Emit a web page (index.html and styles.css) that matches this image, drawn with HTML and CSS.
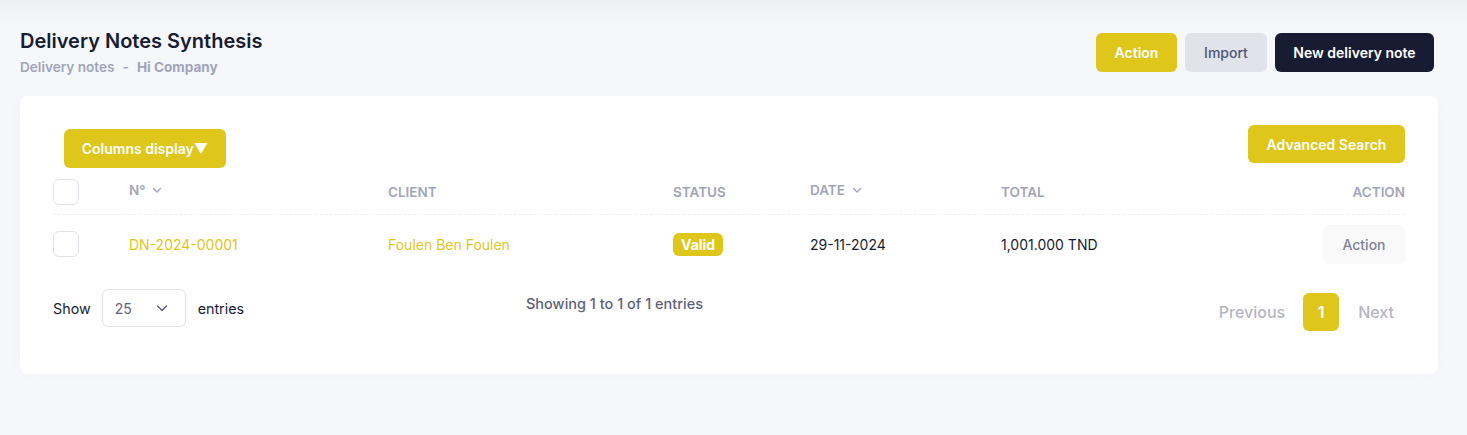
FILE: index.html
```html
<!DOCTYPE html>
<html lang="en">
<head>
<meta charset="utf-8">
<title>Delivery Notes Synthesis</title>
<link rel="stylesheet" href="styles.css">
</head>
<body>
<div class="page">
  <div class="toolbar">
    <div class="heading">
      <h1 class="title">Delivery Notes Synthesis</h1>
      <div class="crumbs"><span>Delivery notes</span><span class="dash">-</span><span class="company">Hi Company</span></div>
    </div>
    <div class="top-actions">
      <button class="btn btn-yellow">Action</button>
      <button class="btn btn-light">Import</button>
      <button class="btn btn-dark">New delivery note</button>
    </div>
  </div>

  <div class="card">
    <div class="card-head">
      <button class="btn btn-yellow btn-columns">Columns display▼</button>
      <button class="btn btn-yellow btn-adv">Advanced Search</button>
    </div>

    <table class="grid">
      <colgroup>
        <col class="c-check"><col class="c-no"><col class="c-client"><col class="c-status"><col class="c-date"><col class="c-total"><col class="c-action">
      </colgroup>
      <thead>
        <tr>
          <th><span class="check"></span></th>
          <th class="sortable">N°<svg class="chev" viewBox="0 0 12 12" width="12" height="12"><path d="M2.5 4.5 6 8l3.5-3.5" fill="none" stroke="currentColor" stroke-width="1.4" stroke-linecap="round" stroke-linejoin="round"/></svg></th>
          <th>CLIENT</th>
          <th>STATUS</th>
          <th class="sortable">DATE<svg class="chev" viewBox="0 0 12 12" width="12" height="12"><path d="M2.5 4.5 6 8l3.5-3.5" fill="none" stroke="currentColor" stroke-width="1.4" stroke-linecap="round" stroke-linejoin="round"/></svg></th>
          <th>TOTAL</th>
          <th class="right">ACTION</th>
        </tr>
      </thead>
      <tbody>
        <tr>
          <td><span class="check"></span></td>
          <td class="link">DN-2024-00001</td>
          <td class="link">Foulen Ben Foulen</td>
          <td><span class="badge">Valid</span></td>
          <td>29-11-2024</td>
          <td>1,001.000 TND</td>
          <td class="right"><button class="btn btn-row">Action</button></td>
        </tr>
      </tbody>
    </table>

    <div class="footer">
      <div class="length">
        <span>Show</span>
        <div class="select"><span>25</span><svg viewBox="0 0 14 14" width="14" height="14"><path d="M2.5 5 7 9.5 11.5 5" fill="none" stroke="#5e6278" stroke-width="1.5" stroke-linecap="round" stroke-linejoin="round"/></svg></div>
        <span>entries</span>
      </div>
      <div class="info">Showing 1 to 1 of 1 entries</div>
      <div class="pager">
        <span class="pg">Previous</span>
        <span class="pg-num">1</span>
        <span class="pg">Next</span>
      </div>
    </div>
  </div>
</div>
</body>
</html>
```

FILE: styles.css
```css
* { box-sizing: border-box; }
html, body { margin: 0; padding: 0; }
body {
  font-family: Inter, "Noto Sans", sans-serif;
  background: linear-gradient(to bottom, #eef0f4 0px, #f5f7fa 28px, #f5f7fa 100%);
  color: #181c32;
  min-height: 435px;
}
.page { padding: 29px 29px 0 20px; }

.toolbar {
  display: flex;
  justify-content: space-between;
  align-items: flex-start;
  height: 67px;
}
.title {
  margin: 0;
  font-size: 20px;
  font-weight: 600;
  line-height: 24px;
  color: #181c32;
}
.crumbs {
  margin-top: 6px;
  font-size: 13.6px;
  font-weight: 600;
  color: #a1a5b7;
  display: flex;
  gap: 8px;
}
.crumbs .company { font-weight: 700; }
.top-actions { display: flex; gap: 8px; margin-top: 4px; margin-right: 4px; }

.btn {
  font-family: inherit;
  border: 0;
  border-radius: 6px;
  font-size: 14px;
  font-weight: 600;
  height: 39px;
  padding: 0 20px;
  cursor: pointer;
}
.btn-yellow { background: #dec61a; color: #fff; }
.btn-light { background: #e1e3ea; color: #4b5675; font-weight: 500; width: 82px; padding: 0; }
.btn-dark { background: #181c32; color: #fff; width: 159px; padding: 0; }
.top-actions .btn-yellow { width: 81px; padding: 0; }

.card {
  background: #fff;
  border-radius: 8px;
  padding: 29px 33px 0 33px;
  height: 278px;
  box-shadow: 0 0 20px rgba(76, 87, 125, 0.02);
}
.card-head {
  display: flex;
  justify-content: space-between;
  align-items: flex-start;
  height: 43px;
}
.btn-columns { margin: 4px 0 0 11px; width: 162px; padding: 0; }
.btn-adv { width: 157px; height: 38px; padding: 0; }

.grid {
  width: 100%;
  border-collapse: collapse;
  table-layout: fixed;
}
.c-check { width: 76px; }
.c-no { width: 259px; }
.c-client { width: 285px; }
.c-status { width: 137px; }
.c-date { width: 191px; }
.c-total { width: 200px; }
.grid th {
  height: 46px;
  padding: 0;
  text-align: left;
  font-size: 13.5px;
  font-weight: 600;
  color: #a1a5b7;
  border-bottom: 1px dashed #eff2f5;
  vertical-align: middle;
  padding-top: 2px;
}
.grid th.sortable { padding-top: 0; padding-bottom: 2px; }
.grid th .chev { margin-left: 6px; vertical-align: -1px; color: #a1a5b7; }
.grid td {
  height: 60px;
  padding: 0;
  font-size: 14px;
  color: #181c32;
  vertical-align: middle;
}
.grid td.link { color: #dec61a; }
.right { text-align: right !important; }
.check {
  display: block;
  width: 26px;
  height: 26px;
  border: 1px solid #e1e3ea;
  border-radius: 6px;
  background: #fff;
}
.badge {
  display: inline-block;
  background: #dec61a;
  color: #fff;
  font-weight: 700;
  font-size: 14px;
  line-height: 23px;
  padding: 0 8px;
  border-radius: 6px;
}
.btn-row {
  background: #f9f9f9;
  color: #7e8299;
  font-weight: 500;
  width: 82px;
  padding: 0;
  height: 39px;
  margin-top: 1px;
}

.footer {
  display: flex;
  align-items: center;
  margin-top: 13px;
  height: 42px;
}
.length {
  display: flex;
  align-items: center;
  font-size: 14.3px;
  color: #181c32;
  width: 473px;
}
.select {
  display: flex;
  align-items: center;
  justify-content: space-between;
  width: 84px;
  height: 38px;
  border: 1px solid #e1e3ea;
  border-radius: 6px;
  margin: 0 12px 0 11px;
  padding: 0 16px 0 12px;
  color: #5e6278;
  font-size: 14px;
}
.info {
  font-size: 14.5px;
  color: #5e6278;
  font-weight: 500;
  margin-bottom: 10px;
}
.pager {
  display: flex;
  align-items: center;
  font-size: 16px;
  font-weight: 500;
  color: #b5b5c3;
  margin-top: 8px;
  margin-left: auto;
}
.pg { padding: 0 11px; }
.pg:first-child { margin-right: 7px; }
.pg:last-child { margin-left: 8px; }
.pg-num {
  width: 36px;
  height: 38px;
  border-radius: 6px;
  background: #dec61a;
  color: #fff;
  font-weight: 600;
  display: flex;
  align-items: center;
  justify-content: center;
}
```
